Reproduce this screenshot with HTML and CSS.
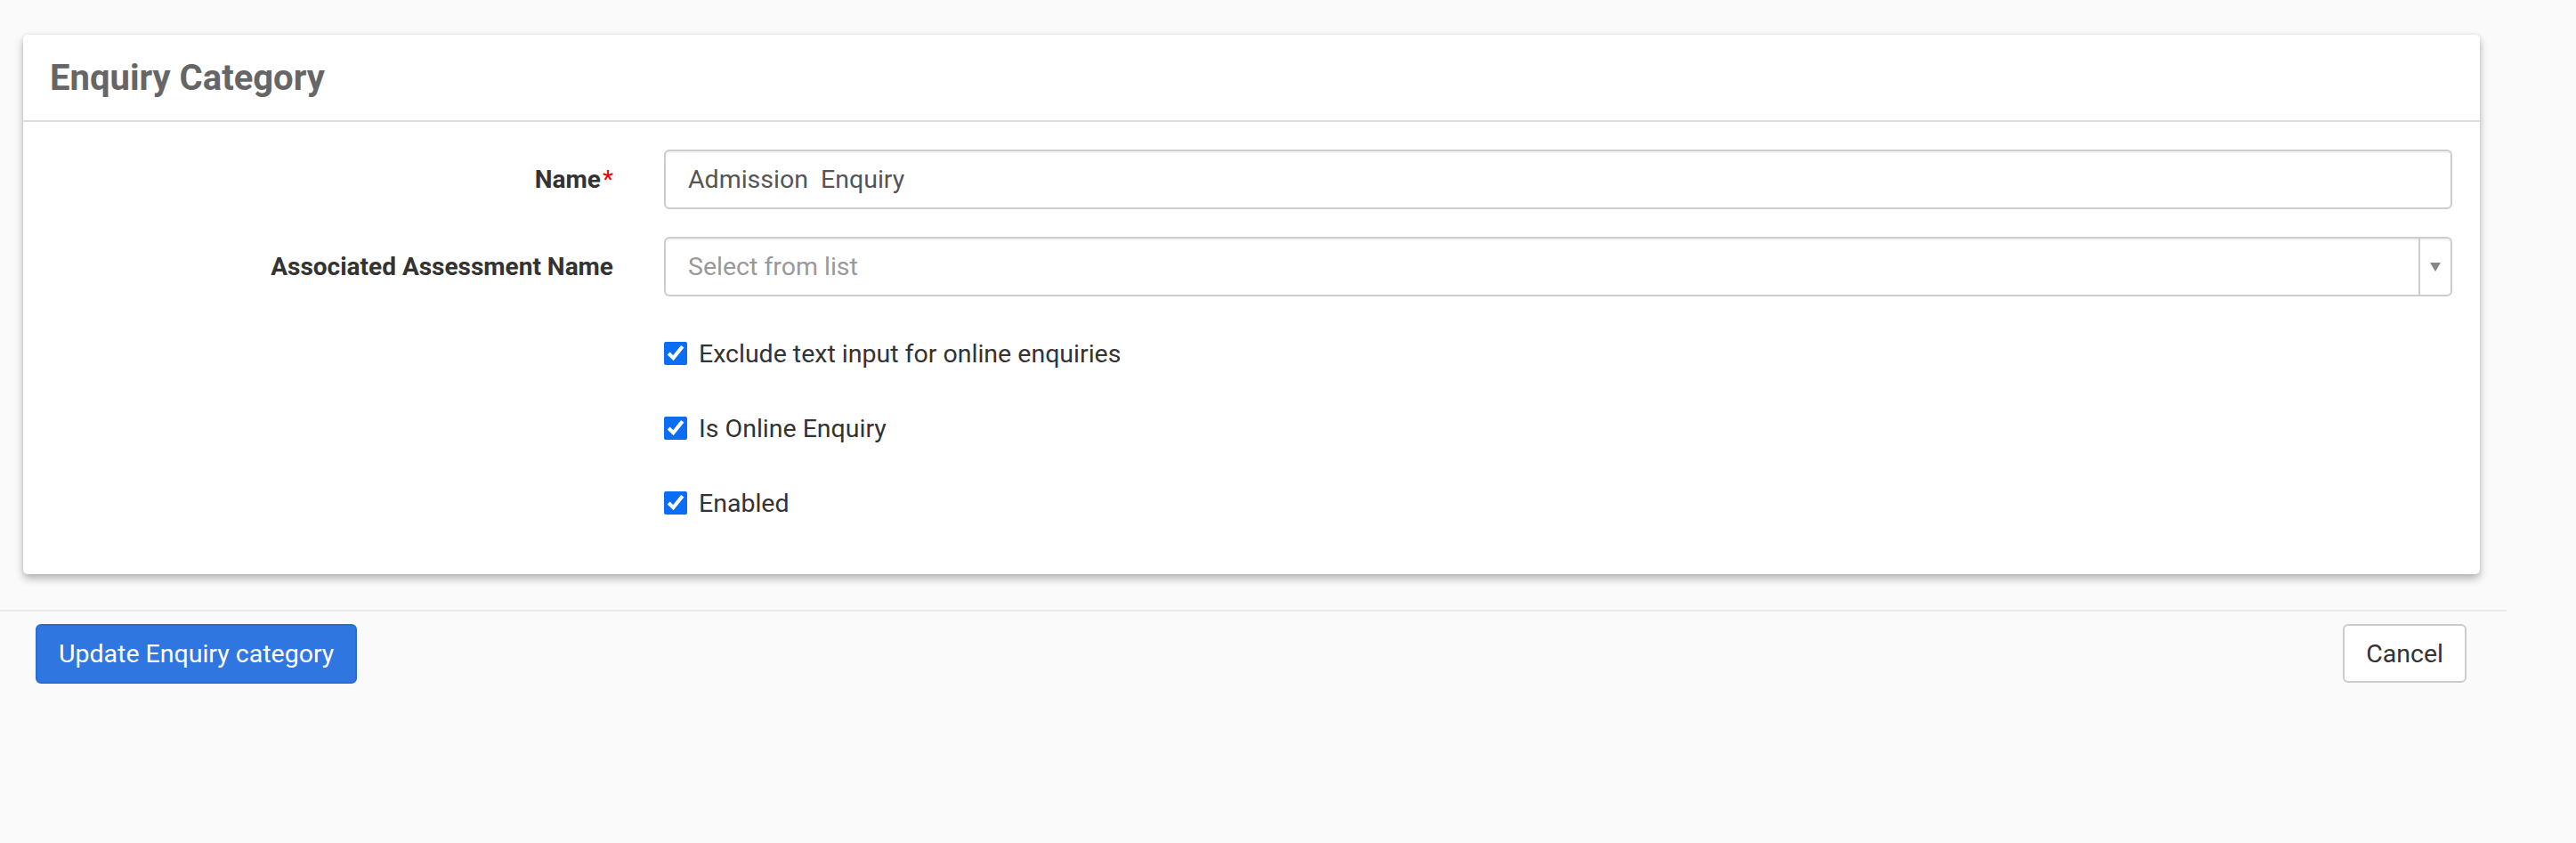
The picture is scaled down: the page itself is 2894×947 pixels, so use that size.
FILE: index.html
```html
<!DOCTYPE html>
<html>
<head>
<meta charset="utf-8">
<title>Enquiry Category</title>
<link rel="stylesheet" href="styles.css">
</head>
<body>
<div class="page">
  <div class="card">
    <div class="card-header">
      <h2 class="title">Enquiry Category</h2>
    </div>
    <div class="card-body">
      <div class="row">
        <label class="lbl">Name<span class="req">*</span></label>
        <div class="ctrl">
          <input class="input" type="text" value="Admission  Enquiry">
        </div>
      </div>
      <div class="row">
        <label class="lbl">Associated Assessment Name</label>
        <div class="ctrl">
          <div class="select">
            <span class="placeholder">Select from list</span>
            <span class="arrow"><span class="tri"></span></span>
          </div>
        </div>
      </div>
      <div class="checks">
        <label class="check"><input type="checkbox" checked><span>Exclude text input for online enquiries</span></label>
        <label class="check"><input type="checkbox" checked><span>Is Online Enquiry</span></label>
        <label class="check"><input type="checkbox" checked><span>Enabled</span></label>
      </div>
    </div>
  </div>
  <div class="footer">
    <button class="btn btn-primary" type="button">Update Enquiry category</button>
    <button class="btn btn-default" type="button">Cancel</button>
  </div>
</div>
</body>
</html>
```
FILE: styles.css
```css
html, body {
  margin: 0;
  padding: 0;
  background: #fafafa;
  font-family: Roboto, "Liberation Sans", Arial, sans-serif;
  font-size: 28.5px;
  color: #333;
}

.page {
  width: 2816px;
  padding-top: 39px;
}

.card {
  margin: 0 30px 0 26px;
  background: #fff;
  border-radius: 5px;
  box-shadow: 0 5px 10px rgba(0, 0, 0, 0.28), 0 0 4px rgba(0, 0, 0, 0.08);
}

.card-header {
  border-bottom: 2px solid #dedede;
  padding: 2px 0 0 30px;
  box-sizing: border-box;
  height: 98px;
}

.title {
  margin: 0;
  font-size: 40px;
  line-height: 94px;
  font-weight: 700;
  color: #666;
}

.card-body {
  padding: 31px 31px 60px 0;
}

.row {
  display: flex;
  align-items: center;
  margin-bottom: 31px;
}

.lbl {
  width: 663px;
  text-align: right;
  font-size: 28px;
  font-weight: 700;
  color: #333;
  margin-right: 57px;
  flex: none;
}

.req {
  color: #e00;
  font-weight: 400;
  margin-left: 2px;
}

.ctrl {
  flex: 1;
}

.input {
  display: block;
  width: 100%;
  box-sizing: border-box;
  height: 67px;
  border: 2px solid #ccc;
  border-radius: 6px;
  padding: 0 25px;
  font-family: Roboto, "Liberation Sans", Arial, sans-serif;
  font-size: 28.5px;
  color: #555;
  background: #fff;
  box-shadow: inset 0 2px 2px rgba(0, 0, 0, 0.06);
  outline: none;
}

.select {
  display: flex;
  align-items: stretch;
  height: 67px;
  box-sizing: border-box;
  border: 2px solid #ccc;
  border-radius: 6px;
  background: #fff;
  box-shadow: inset 0 2px 2px rgba(0, 0, 0, 0.06);
}

.placeholder {
  flex: 1;
  display: flex;
  align-items: center;
  padding-left: 25px;
  color: #999;
}

.arrow {
  width: 34px;
  border-left: 2px solid #ccc;
  display: flex;
  align-items: center;
  justify-content: center;
}

.tri {
  width: 0;
  height: 0;
  border-left: 6px solid transparent;
  border-right: 6px solid transparent;
  border-top: 10px solid #888;
}

.checks {
  margin-left: 720px;
  padding-top: 13px;
  display: flex;
  flex-direction: column;
  gap: 44px;
}

.check {
  display: flex;
  align-items: center;
  height: 40px;
  color: #333;
}

.check input {
  width: 26px;
  height: 26px;
  margin: 0 13px 0 0;
  accent-color: #0b6cf5;
}

.footer {
  margin-top: 40px;
  border-top: 2px solid #ececec;
  padding: 14px 45px 0 40px;
  display: flex;
  justify-content: space-between;
  align-items: flex-start;
}

.btn {
  font-family: Roboto, "Liberation Sans", Arial, sans-serif;
  font-size: 28.5px;
  height: 67px;
  border-radius: 6px;
  padding: 0 24px;
  cursor: pointer;
}

.btn-primary {
  background: #3076e0;
  border: 2px solid #2a6cd6;
  color: #fff;
}

.btn-default {
  background: #fff;
  border: 2px solid #ccc;
  color: #333;
  height: 66px;
  padding: 0 24px;
}
```
